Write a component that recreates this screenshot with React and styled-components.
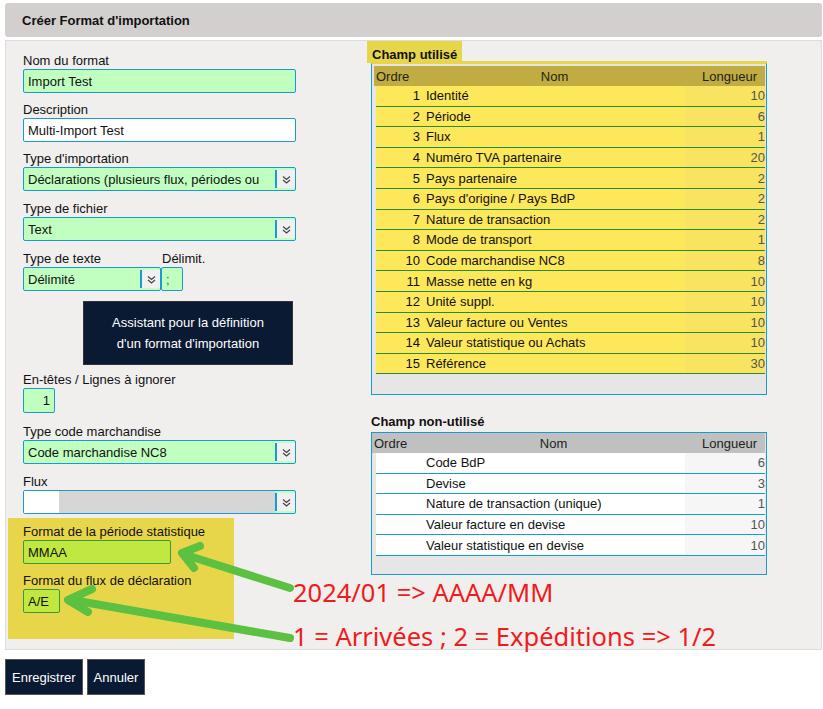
import React from "react";
import styled, { createGlobalStyle } from "styled-components";

const G = createGlobalStyle`
  body{margin:0;background:#fff;font-family:Arial,"Liberation Sans",sans-serif;font-size:13px;color:#111;}
`;
const Page = styled.div`position:relative;width:823px;height:709px;padding:3px 1px 0 5px;box-sizing:border-box;`;
const Header = styled.div`height:34px;background:#d3cfce;border-radius:3px;display:flex;align-items:center;padding-left:17px;font-weight:bold;font-size:13px;`;
const Panel = styled.div`margin-top:3px;height:610px;background:#f0efee;border:1px solid #dcdcdc;box-sizing:border-box;display:flex;padding:0 0 0 1px;`;
const Left = styled.div`width:362px;display:flex;flex-direction:column;padding:12px 0 0 16px;box-sizing:border-box;`;
const Label = styled.div`font-size:13px;line-height:15px;margin-bottom:1px;margin-top:${p=>p.$mt||0}px;`;
const Input = styled.div`width:${p=>p.$w||273}px;height:24px;box-sizing:border-box;border:1px solid ${p=>p.$b||"#1a9bd0"};border-radius:2px;background:${p=>p.$bg||"#c0ffc0"};display:flex;align-items:center;padding:0 4px;font-size:13px;justify-content:${p=>p.$right?"flex-end":"flex-start"};color:${p=>p.$c||"#111"};`;
const Sel = styled(Input)`padding:0;`;
const SelText = styled.div`flex:1;padding:0 4px;white-space:nowrap;overflow:hidden;height:100%;display:flex;align-items:center;background:${p=>p.$bg||"transparent"};`;
const Arrow = styled.div`width:20px;display:flex;align-items:center;justify-content:center;border-left:2px solid #1a9bd0;background:#f0f0f0;box-sizing:border-box;margin:3px 0;height:18px;`;
const Row = styled.div`display:flex;align-items:flex-end;`;
const Big = styled.div`margin:10px 0 0 60px;width:210px;height:64px;background:#0b1a33;color:#fff;display:flex;align-items:center;justify-content:center;text-align:center;line-height:21px;font-size:13px;border:1px solid #333;box-sizing:border-box;`;
const Yellow = styled.div`margin:4px 0 0 -15px;width:226px;height:121px;background:#e8d64a;padding:6px 0 0 15px;box-sizing:border-box;`;
const Right = styled.div`flex:1;padding:0;`;
const Tab = styled.div`display:inline-block;background:#e8d64a;font-weight:bold;padding:6px 5px 1px 5px;margin-left:-2px;`;
const Box = styled.div`width:396px;height:${p=>p.$h}px;border:1px solid #1a9bd0;background:#e6e6e6;margin-left:2px;box-sizing:border-box;padding:2px 1px 0 2px;${p=>p.$y?"border-top-color:#e8d64a;box-shadow:0 -2px 0 #e8d64a;":""}`;
const THead = styled.div`display:grid;grid-template-columns:56px 1fr 80px;height:20px;align-items:center;background:${p=>p.$bg};padding:0 8px 0 2px;font-size:13px;color:#222;`;
const TRow = styled.div`display:grid;grid-template-columns:50px 1fr 80px;height:20.6px;box-sizing:border-box;align-items:center;background:${p=>p.$bg};border-bottom:1px solid ${p=>p.$line};font-size:13px;margin-left:2px;`;
const Num = styled.div`text-align:right;padding-right:6px;`;
const Len = styled.div`text-align:right;color:#555;background:${p=>p.$bg};height:100%;display:flex;align-items:center;justify-content:flex-end;`;
const Btns = styled.div`display:flex;gap:4px;margin-top:9px;`;
const Btn = styled.div`height:36px;background:#0b1a33;color:#fff;padding:0 6px;display:flex;align-items:center;font-size:13px;border:1px solid #555;box-sizing:border-box;`;
const Note = styled.div`position:absolute;left:293px;top:${p=>p.$t}px;color:#ee1c1c;font-family:"Noto Sans",sans-serif;font-size:25.5px;line-height:28px;`;
const Over = styled.svg`position:absolute;left:0;top:0;pointer-events:none;`;

const Chev = () => (
  <svg width="11" height="11" viewBox="0 0 11 11" fill="none" stroke="#444" strokeWidth="1.2"><path d="M2 2.5l3.5 3 3.5-3M2 6l3.5 3 3.5-3"/></svg>
);
const Select = ({w, children, bg}) => (
  <Sel $w={w}><SelText $bg={bg}>{children}</SelText><Arrow><Chev/></Arrow></Sel>
);

const used = [[1,"Identité",10],[2,"Période",6],[3,"Flux",1],[4,"Numéro TVA partenaire",20],[5,"Pays partenaire",2],[6,"Pays d'origine / Pays BdP",2],[7,"Nature de transaction",2],[8,"Mode de transport",1],[10,"Code marchandise NC8",8],[11,"Masse nette en kg",10],[12,"Unité suppl.",10],[13,"Valeur facture ou Ventes",10],[14,"Valeur statistique ou Achats",10],[15,"Référence",30]];
const unused = [["Code BdP",6],["Devise",3],["Nature de transaction (unique)",1],["Valeur facture en devise",10],["Valeur statistique en devise",10]];

export default function App(){
  return (<Page><G/>
    <Header>Créer Format d'importation</Header>
    <Panel>
      <Left>
        <Label>Nom du format</Label>
        <Input>Import Test</Input>
        <Label $mt={9}>Description</Label>
        <Input $bg="#fff">Multi-Import Test</Input>
        <Label $mt={9}>Type d'importation</Label>
        <Select>Déclarations (plusieurs flux, périodes ou</Select>
        <Label $mt={10}>Type de fichier</Label>
        <Select>Text</Select>
        <Row style={{marginTop:10}}>
          <div><Label>Type de texte</Label><Select w={138}>Délimité</Select></div>
          <div><Label style={{paddingLeft:1}}>Délimit.</Label><Input $w={22} $c="#555">;</Input></div>
        </Row>
        <Big>Assistant pour la définition<br/>d'un format d'importation</Big>
        <Label $mt={7}>En-têtes / Lignes à ignorer</Label>
        <Input $w={32} $right style={{height:25}}>1</Input>
        <Label $mt={11}>Type code marchandise</Label>
        <Select>Code marchandise NC8</Select>
        <Label $mt={10}>Flux</Label>
        <Sel><SelText $bg="#fff" style={{flex:"0 0 27px"}}/><SelText $bg="#d6d6d6"/><Arrow><Chev/></Arrow></Sel>
        <Yellow>
          <Label>Format de la période statistique</Label>
          <Input $w={148} $bg="#c0e840" $b="#3a9a3a">MMAA</Input>
          <Label $mt={9}>Format du flux de déclaration</Label>
          <Input $w={37} $bg="#c0e840" $b="#3a9a3a">A/E</Input>
        </Yellow>
      </Left>
      <Right>
        <Tab>Champ utilisé</Tab>
        <Box $h={332} $y>
          <THead $bg="#c0ac40"><span>Ordre</span><span style={{textAlign:"center"}}>Nom</span><span style={{textAlign:"right"}}>Longueur</span></THead>
          {used.map(r=>(<TRow key={r[0]} $bg="#fce85a" $line="#2a8a3a"><Num>{r[0]}</Num><span>{r[1]}</span><Len $bg="#f8e460">{r[2]}</Len></TRow>))}
        </Box>
        <Label $mt={19} style={{fontWeight:"bold",paddingLeft:2,marginBottom:3}}>Champ non-utilisé</Label>
        <Box $h={143}>
          <THead $bg="#c0c0c0" style={{marginTop:-2,marginLeft:-2}}><span>Ordre</span><span style={{textAlign:"center"}}>Nom</span><span style={{textAlign:"right"}}>Longueur</span></THead>
          {unused.map(r=>(<TRow key={r[0]} $bg="#fff" $line="#1a9bd0"><Num/><span>{r[0]}</span><Len $bg="#f6f6f6">{r[1]}</Len></TRow>))}
        </Box>
      </Right>
    </Panel>
    <Btns><Btn>Enregistrer</Btn><Btn>Annuler</Btn></Btns>
    <Note $t={578}>2024/01 =&gt; AAAA/MM</Note>
    <Note $t={622}>1 = Arrivées ; 2 = Expéditions =&gt; 1/2</Note>
    <Over width="823" height="709">
      <g stroke="#5cc040" strokeWidth="8" strokeLinecap="round" strokeLinejoin="round" fill="none">
        <path d="M290 588 L186 555"/><path d="M200 546 L182 553 L194 568"/>
        <path d="M290 638 L72 600"/><path d="M92 589 L68 600 L88 612"/>
      </g>
    </Over>
  </Page>);
}
